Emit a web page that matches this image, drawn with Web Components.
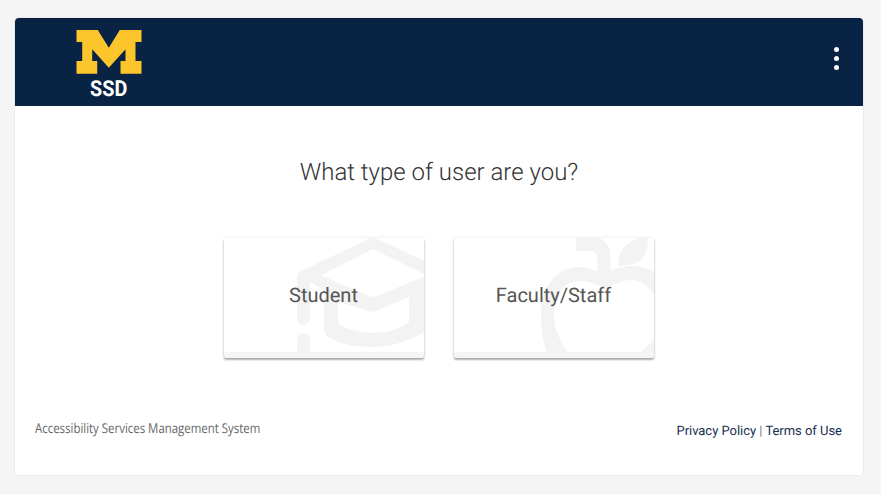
<!DOCTYPE html>
<html>
<head>
<meta charset="utf-8">
<title>SSD</title>
<style>
  html, body { margin: 0; padding: 0; background: #f5f5f5; }
  body { font-family: Roboto, sans-serif; text-rendering: geometricPrecision; }
</style>
</head>
<body>
<ssd-page>
  <ssd-header></ssd-header>
  <ssd-chooser title-text="What type of user are you?">
    <user-tile label="Student" icon="cap"></user-tile>
    <user-tile label="Faculty/Staff" icon="apple"></user-tile>
  </ssd-chooser>
  <ssd-footer></ssd-footer>
</ssd-page>

<script>
class SsdPage extends HTMLElement {
    constructor() {
        super();
        this.attachShadow({ mode: 'open' });
    }
    connectedCallback() {
        this.shadowRoot.innerHTML = `
            <style>
                :host { display: block; padding: 18px 18px 19px 15px; }
                .card {
                    display: flex;
                    flex-direction: column;
                    height: 457px;
                    background: #fff;
                    border-radius: 4px;
                    box-shadow: 0 0 0 1px #ececec;
                    overflow: hidden;
                }
            </style>
            <div class="card"><slot></slot></div>
        `;
    }
}

class SsdHeader extends HTMLElement {
    constructor() {
        super();
        this.attachShadow({ mode: 'open' });
    }
    connectedCallback() {
        this.shadowRoot.innerHTML = `
            <style>
                :host {
                    display: flex;
                    justify-content: space-between;
                    height: 88px;
                    background: #092344;
                    color: #fff;
                }
                .logo {
                    display: flex;
                    flex-direction: column;
                    align-items: center;
                    width: 66px;
                    margin: 12px 0 0 60.5px;
                }
                svg { display: block; }
                .ssd {
                    font: 700 22px/22px Roboto, sans-serif;
                    margin-top: 4.5px;
                    transform: scaleX(.9);
                }
                .menu {
                    display: flex;
                    flex-direction: column;
                    gap: 4.3px;
                    margin: 28.800px 24px 0 0;
                }
                .menu i { display: block; width: 5px; height: 5px; border-radius: 50%; background: #fff; }
            </style>
            <div class="logo">
                <svg width="66" height="44" viewBox="75.5 30 66 44">
                    <path fill="#fdc52c" d="M76 30H97.300L108.300 47.700L119.300 30H141V42H135V61H141V73.700H120V61H125V49.300L108.300 67.700L91.700 49.300V61H96.700V73.700H76V61H81.700V42H76Z"/>
                </svg>
                <div class="ssd">SSD</div>
            </div>
            <div class="menu"><i></i><i></i><i></i></div>
        `;
    }
}

class SsdChooser extends HTMLElement {
    constructor() {
        super();
        this.attachShadow({ mode: 'open' });
    }
    connectedCallback() {
        this.shadowRoot.innerHTML = `
            <style>
                :host { display: block; padding-top: 52px; }
                h1 {
                    margin: 0 0 52px;
                    font: 300 24px/28px Roboto, sans-serif;
                    color: #333;
                    text-align: center;
                }
                .tiles { display: flex; justify-content: center; gap: 30px; }
            </style>
            <h1>${this.getAttribute('title-text')}</h1>
            <div class="tiles"><slot></slot></div>
        `;
    }
}

const ICONS = {
    cap: `<g fill="#f3f3f3">
            <path fill-rule="evenodd" d="M149-1L205 25V91Q176 109 149 109Q124 109 107 101Q100 97 100 91V52L86 44V80.500A6.500 6.500 0 0 1 73 80.500V40Q73 36 77 33ZM149 11L97 37.500L149 59.500L203 37.500ZM114 64V83Q114 86 118 88Q132 95 149 95Q170 95 185 84V59L149 74Z"/>
            <path d="M73 101.500A6.500 6.500 0 0 1 86 101.500V125H73Z"/>
          </g>`,
    apple: `<g fill="#f3f3f3">
            <path fill-rule="evenodd" d="M122-2H140C150 0 156.500 8 156.500 18V32C166 29 172 28 178 28C205 28 226 50 226 78C226 100 210 125 205 125H96C90 108 87 95 87 76C87 48 104 29 124 29C131 29 138 31 143.500 33.500V20C143.500 15 140 13 136 13H122ZM125 43C110 43 100 57 100 76C100 92 107 105 116 118H182C195 108 208 95 208 82C208 60 192 42 178 42C168 42 160 46 151 51C143 46 134 43 125 43Z"/>
            <path d="M164 28C164 10 176 0 194-1C194 14 192 28 164 28Z"/>
          </g>`
};

class UserTile extends HTMLElement {
    constructor() {
        super();
        this.attachShadow({ mode: 'open' });
    }
    connectedCallback() {
        const icon = ICONS[this.getAttribute('icon')];
        this.shadowRoot.innerHTML = `
            <style>
                :host {
                    display: flex;
                    position: relative;
                    box-sizing: border-box;
                    width: 200px;
                    height: 120px;
                    align-items: center;
                    justify-content: center;
                    overflow: hidden;
                    background: #fff;
                    border-bottom: 6px solid #f5f5f5;
                    border-radius: 2px;
                    box-shadow: 0 2px 2px rgba(0,0,0,.3), 0 0 3px rgba(0,0,0,.12);
                }
                svg { position: absolute; left: 0; top: 0; }
                span {
                    position: relative;
                    margin-right: 1px;
                    font: 400 20px/24px Roboto, sans-serif;
                    color: #555;
                }
            </style>
            <svg width="200" height="114" viewBox="0 0 200 114">${icon}</svg>
            <span>${this.getAttribute('label')}</span>
        `;
    }
}

class SsdFooter extends HTMLElement {
    constructor() {
        super();
        this.attachShadow({ mode: 'open' });
    }
    connectedCallback() {
        this.shadowRoot.innerHTML = `
            <style>
                :host {
                    display: flex;
                    justify-content: space-between;
                    padding: 62px 21px 0 20px;
                }
                .name {
                    font: 13.5px/16px "Open Sans", sans-serif;
                    color: #666;
                    white-space: nowrap;
                    width: 225px;
                    transform: scaleX(.847);
                    transform-origin: left;
                }
                .links { font: 13px/16px Roboto, sans-serif; color: #152f50; margin-top: 4px; letter-spacing: -.03px; }
                .links b { font-weight: 400; color: #777; }
            </style>
            <div class="name">Accessibility Services Management System</div>
            <div class="links">Privacy Policy <b>|</b> Terms of Use</div>
        `;
    }
}

customElements.define('ssd-page', SsdPage);
customElements.define('ssd-header', SsdHeader);
customElements.define('ssd-chooser', SsdChooser);
customElements.define('user-tile', UserTile);
customElements.define('ssd-footer', SsdFooter);
</script>
</body>
</html>
